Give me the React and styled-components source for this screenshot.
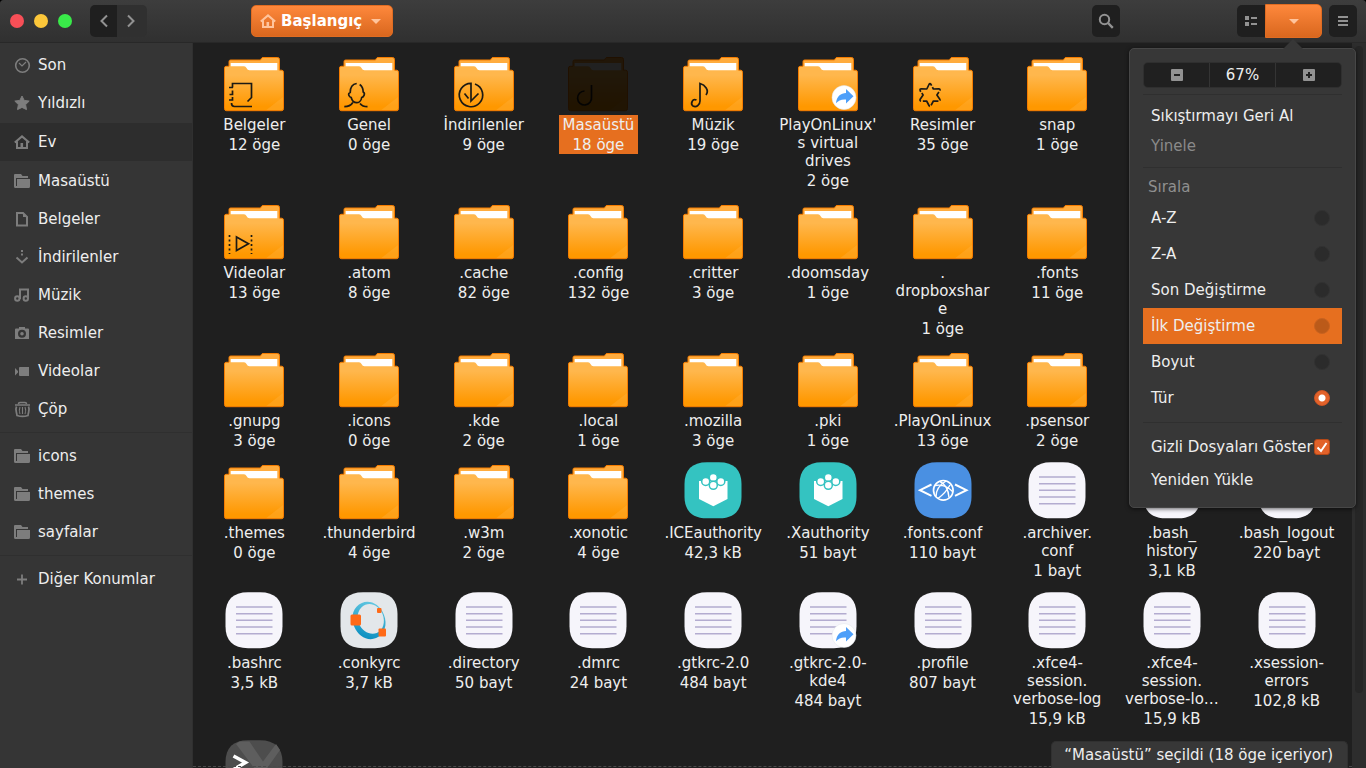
import { useState } from "react";
import styled, { createGlobalStyle, css } from "styled-components";

const GlobalStyle = createGlobalStyle`
    * {
        box-sizing: border-box;
    }
    body {
        margin: 0;
        background: #000;
        color: #eeeeee;
        font-family: "DejaVu Sans", sans-serif;
        font-size: 15px;
        line-height: 18px;
    }
    button, input {
        font: inherit;
        color: inherit;
        margin: 0;
        padding: 0;
        border: none;
        background: none;
    }
    svg {
        display: block;
    }
`;

const Window = styled.div`
    height: 100vh;
    display: flex;
    flex-direction: column;
    overflow: hidden;
    border-radius: 4px 4px 0 0;
    background-color: #1f1f1f;
`;

/* header bar */

const Header = styled.header`
    height: 43px;
    flex: none;
    display: flex;
    align-items: center;
    padding: 0 9px 0 10px;
    background: linear-gradient(#3d3d3d, #303030);
    border-bottom: 1px solid #282828;
`;
const Lights = styled.div`
    display: flex;
    gap: 10px;
`;
const Light = styled.button`
    width: 14px;
    height: 14px;
    border-radius: 99px;
    background-color: ${props => props.$color};
`;
const NavButtons = styled.div`
    display: flex;
    margin-left: 18px;
`;
const HeaderButton = styled.button`
    width: 28px;
    height: 32px;
    display: flex;
    align-items: center;
    justify-content: center;
    border-radius: 5px;
    background-color: #1f1f1f;
    color: #929292;
`;
const BackButton = styled(HeaderButton)`
    width: 27px;
    border-radius: 5px 0 0 5px;
`;
const ForwardButton = styled(HeaderButton)`
    width: 30px;
    border-radius: 0 5px 5px 0;
    background-color: #303030;
`;
const orange = css`
    background: linear-gradient(#fe883c, #d9671e);
    border: 1px solid #e06c22;
`;
const PathButton = styled.button`
    ${orange}
    height: 32px;
    display: flex;
    align-items: center;
    gap: 5px;
    margin-left: 104px;
    padding: 0 11px 0 8px;
    border-radius: 5px;
    color: white;
    font-weight: bold;
    svg:last-child {
        margin-left: 4px;
    }
`;
const HeaderRight = styled.div`
    display: flex;
    align-items: center;
    margin-left: auto;
`;
const ViewButtons = styled.div`
    display: flex;
    align-items: center;
    margin: 0 7px 0 117px;
`;
const ListButton = styled(HeaderButton)`
    border-radius: 5px 0 0 5px;
`;
const MenuAnchor = styled.div`
    position: relative;
`;
const ViewMenuButton = styled.button`
    ${orange}
    width: 57px;
    height: 34px;
    display: flex;
    align-items: center;
    justify-content: center;
    border-radius: 0 5px 5px 0;
`;

/* popover */

const Popover = styled.div`
    position: absolute;
    z-index: 2;
    top: 44px;
    right: -34px;
    width: 227px;
    padding: 13px 13px 12px;
    border: 1px solid #474747;
    border-radius: 5px;
    background-color: #373737;
    box-shadow: 0 1px 4px rgba(0, 0, 0, 0.6);
    &::before {
        content: "";
        position: absolute;
        top: -10px;
        right: 52px;
        border: 10px solid transparent;
        border-top: none;
        border-bottom-color: #373737;
    }
`;
const ZoomBar = styled.div`
    display: grid;
    grid-template-columns: repeat(3, 1fr);
    gap: 1px;
    border: 1px solid #2f2f2f;
    border-radius: 5px;
    overflow: hidden;
    background-color: #343434;
`;
const ZoomCell = styled.button`
    height: 24px;
    display: flex;
    align-items: center;
    justify-content: center;
    background-color: #202020;
`;
const MenuLine = styled.hr`
    height: 1px;
    margin: 6px 0;
    border: none;
    background-color: #2f2f2f;
`;
const MenuItem = styled.button`
    width: 100%;
    height: 30px;
    display: block;
    padding: 0 8px;
    text-align: left;
    &:disabled {
        color: #8a8a8a;
    }
`;
const MenuTitle = styled.div`
    padding: 4px 5px;
    color: #8f8f8f;
`;
const Choice = styled.label`
    height: 36px;
    display: flex;
    align-items: center;
    justify-content: space-between;
    padding: 0 12px 0 8px;
    white-space: nowrap;
    background-color: ${props => props.$hovered ? "#e66f1f" : "transparent"};
`;
const Radio = styled.input`
    appearance: none;
    width: 16px;
    height: 16px;
    border-radius: 99px;
    background-color: ${props => props.$hovered ? "#bb5a19" : "#2b2b2b"};
    border: 1px solid ${props => props.$hovered ? "#c8621f" : "#323232"};
    &:checked {
        border-color: #cf5524;
        background: radial-gradient(circle, white 3px, #e2622a 4px);
    }
`;
const CheckWrap = styled.span`
    position: relative;
    svg {
        position: absolute;
        inset: 0;
        pointer-events: none;
    }
`;
const Checkbox = styled.input`
    appearance: none;
    display: block;
    width: 16px;
    height: 16px;
    border-radius: 3px;
    background-color: #2b2b2b;
    &:checked {
        border: 1px solid #b44817;
        background-color: #e2622a;
    }
`;

/* sidebar */

const Body = styled.div`
    flex: 1;
    min-height: 0;
    display: flex;
`;
const Sidebar = styled.nav`
    width: 193px;
    flex: none;
    padding-top: 3px;
    background-color: #353535;
    border-right: 1px solid #303030;
`;
const Place = styled.a`
    height: 38px;
    display: flex;
    align-items: center;
    gap: 8px;
    padding-left: 14px;
    margin: ${props => props.$active ? "1px 0" : 0};
    background-color: ${props => props.$active ? "#2d2d2d" : "transparent"};
    color: #eeeeee;
    text-decoration: none;
    svg {
        color: #7d7d7d;
    }
`;
const PlaceLine = styled.hr`
    height: 1px;
    margin: 4px 0;
    border: none;
    background-color: #2f2f2f;
`;

/* files */

const Main = styled.main`
    position: relative;
    flex: 1;
    min-width: 0;
    display: flex;
`;
const Files = styled.div`
    flex: 1;
    display: grid;
    grid-template-columns: repeat(10, 1fr);
    align-content: start;
    row-gap: 9px;
    padding: 8px 8px 0 4px;
    overflow: hidden;
`;
const File = styled.button`
    display: flex;
    flex-direction: column;
    align-items: center;
    justify-content: flex-start;
    min-width: 0;
`;
const FileIcon = styled.svg`
    width: 64px;
    height: 64px;
    filter: ${props => props.$dimmed ? "brightness(0.13)" : "none"};
`;
const FileLabel = styled.span`
    display: flex;
    flex-direction: column;
    gap: 2px;
    padding: 1px 4px 0;
    white-space: pre;
    text-align: center;
    background-color: ${props => props.$selected ? "#e66f1f" : "transparent"};
`;
const Scrollbar = styled.div`
    width: 14px;
    padding: 3px;
    background-color: #2d2d2d;
`;
const ScrollThumb = styled.div`
    height: 90%;
    border-radius: 99px;
    background-color: #262626;
`;
const CutLine = styled.div`
    position: absolute;
    left: 0;
    right: 14px;
    bottom: 1px;
    border-top: 1px dashed #4a4a4a;
`;
const Status = styled.div`
    position: absolute;
    right: 18px;
    bottom: 0;
    padding: 4px 14px 4px 12px;
    border: 1px solid #303030;
    border-bottom: none;
    border-radius: 5px 5px 0 0;
    background-color: #373737;
`;

const placeIcons = {
    recent: <g fill="none" stroke="currentColor"><circle cx="8.5" cy="8.5" r="6.8" strokeWidth="1.6" /><path d="M5 6l3 3 4-4" strokeWidth="1.2" /></g>,
    star: <path d="M8 1l2.2 4.4 5 .7-3.6 3.5.9 5L8 12.4l-4.500 2.200.900-5L.8 6.1l5-.7z" fill="currentColor" stroke="currentColor" strokeLinejoin="round" />,
    home: <g fill="none" stroke="currentColor" strokeWidth="2"><path d="M.8 8.6L8 2.4l7.2 6.2M3 7.5V14h10V7.5" /><path d="M7.8 14V9" strokeWidth="2.6" /></g>,
    folder: <path d="M0 2q0-1 1-1h6l1.5 2H14v2H2v8h1V6h13v7.5q0 1.5-1.5 1.5h-13Q0 15 0 13.5z" fill="currentColor" />,
    document: <g><path d="M3 2h6l4 4v8.5H3z" fill="none" stroke="currentColor" strokeWidth="2" /><path d="M9 1.5V6h4.5z" fill="currentColor" /></g>,
    download: <g fill="none" stroke="currentColor" strokeWidth="2"><path d="M8 1v6.5" strokeDasharray="2 1.5" /><path d="M2.5 8.5L8 13.5l5.5-5" /></g>,
    music: <g fill="none" stroke="currentColor" strokeWidth="2"><circle cx="3.3" cy="11.5" r="2.2" /><circle cx="11.8" cy="11.5" r="2.2" /><path d="M6 12V2.5h8V12" /></g>,
    camera: <path fillRule="evenodd" d="M5 2h6v1.5h3a1 1 0 011 1V14H1V4.5a1 1 0 011-1h3zM8 4.8a4 4 0 100 8 4 4 0 000-8zM8 7a1.800 1.800 0 110 3.600A1.800 1.800 0 018 7z" fill="currentColor" />,
    video: <path d="M1 5l3 3v1.5l-3 3zM5 4.5L6 4h9v9H6l-1-.5z" fill="currentColor" />,
    trash: <g fill="none" stroke="currentColor"><path d="M1 4h15M4.5 3q0-1.500 1.500-1.500h5q1.500 0 1.500 1.500" strokeWidth="1.6" /><path d="M2.5 5.5c-1.500 3 0 5 .5 9 3 1 8 1 11 0 .5-4 2-6 .5-9" strokeWidth="1.7" /><path d="M6 6q-1.500 3.500 0 7M8.500 6v7M11 6q1.500 3.500 0 7" strokeWidth="1.1" /></g>,
    plus: <path d="M8 3.5v10M3 8.5h10" fill="none" stroke="currentColor" strokeWidth="1.8" />,
};

const PlaceIcon = ({ name, color }) => (
    <svg width="16" height="16" viewBox="0 0 16 16" overflow="visible" color={color} aria-hidden="true">{placeIcons[name]}</svg>
);

const CaretDown = () => (
    <svg width="10" height="5" viewBox="0 0 10 5" aria-hidden="true"><path d="M0 0h10L5 5z" fill="#ffc49c" /></svg>
);

// emblems are drawn on the lower left corner of the folder
const emblems = {
    documents: <path d="M10.5 36.5v-4h19v14l-4 4M7 36.5h4M10.5 39.5v4H7.5M10.5 46v3H7M9.5 52q0 3.5 3 3.5h17.5" />,
    public: <path d="M19.700 32.500q-6.500 1-6.500 9c-3 1-1 4.500 1 5 1 4 4 5.200 5.500 5.200s4.500-1.200 5-5.200c2-.5 4-4 1.500-5.500q0-5-3.500-7.500M7.300 55.700q6 0 8.500-4.200M23 52.500q2.500 3.200 7.500 3.200" />,
    downloads: <path d="M23 33a11.700 11.700 0 11-4-.7V50l7.500-7.500M12.500 42.500l4 5" />,
    desktop: <path d="M25.500 34v12a7 7 0 11-7-6" />,
    music: <path d="M15.500 49c-4-2-6.500 4-3.500 6 3 1.500 7-.5 7-5V32.500c5 1.500 9.500 6.500 6 11.500" />,
    pictures: <path d="M15.800 38L18 33.500q1-1.800 2 0L22.400 38L27.600 37.800q2 .2 1.200 2L25.900 44L28.800 48.200q.8 2-1.200 2L22.400 50L20 54.500q-1 1.800-2 0L15.600 50L10.400 50.200q-2-.2-1.200-2L12.100 44L9.200 39.800q-.8-2 1.200-2z" strokeDasharray="10 1.700" strokeDashoffset="1" strokeLinejoin="round" />,
    videos: <><path d="M14.500 38v13.500L26.500 44.800z" /><path d="M7.500 36v19M29.500 36v19" strokeDasharray="2 2.500" /></>,
};

const Folder = ({ emblem }) => (
    <>
        <path d="M7 22V10.500q0-1.500 1.500-1.500H38.500l1-1.700q.4-.8 1.500-.8H55.500q2 0 2 2V22z" fill="#ffac3e" stroke="#f57c00" />
        <path d="M8.700 12h46.600v8H8.700z" fill="white" />
        <path d="M2.500 17q0-1.700 1.700-1.700H22q1.700 0 2.500 1.700 1 2.200 3 2.200h32q2 0 2 2v36.500q0 2-2 2H4.500q-2 0-2-2z" fill="url(#folderFront)" />
        <path d="M61 46v11.500q0 1.700-1.700 1.700H44z" fill="#ffb74d" opacity="0.3" />
        <path d="M7 15.300H4.200Q2.500 15.300 2.500 17v40.700q0 2 2 2h55q2 0 2-2V21.200q0-2-2-2h-2" fill="none" stroke="#f57c00" />
        <g fill="none" stroke="#1c1a14" strokeWidth="1.7">{emblems[emblem]}</g>
    </>
);

const Squircle = ({ fill }) => (
    <path d="M26 3.300h12C53 3.300 60.500 11 60.500 25v12.600C60.500 51.600 53 59.300 38 59.300H26C11 59.300 3.500 51.600 3.500 37.600V25C3.500 11 11 3.300 26 3.300z" fill={fill} />
);

const TextFile = () => (
    <>
        <Squircle fill="#f6f5fb" />
        <path d="M14 18h36.500M14 24.700h36.500M14 31.300h36.500M14 38h36.500M14 44.700h36.500" stroke="#b3acd0" strokeWidth="1.5" />
    </>
);

const BrickFile = () => (
    <>
        <Squircle fill="#34c3c1" />
        <path d="M18 22h28.500v18L32.300 47.300 18 40z" fill="white" />
        <g fill="white" stroke="#34c3c1" strokeWidth="1.5">
            <circle cx="32.3" cy="18.5" r="4" />
            <circle cx="24.7" cy="22.4" r="4" />
            <circle cx="39.8" cy="22.4" r="4" />
            <circle cx="32.3" cy="26.3" r="4" />
        </g>
    </>
);

const WebFile = () => (
    <>
        <Squircle fill="#4a90e2" />
        <g fill="none" stroke="white">
            <path d="M20.500 25.500L9 31.200l11.500 5.600M44 25.500l11.500 5.700L44 36.800" strokeWidth="2" />
            <circle cx="32.3" cy="31.3" r="9.8" strokeWidth="1.7" />
            <path d="M24 26.500q10-2 17.500 6M29 22.500q8 4 9 16M35 22q-10 6-10 15.500M27 39.500q8-6 12-13.500" strokeWidth="1.4" />
        </g>
    </>
);

const ConkyFile = () => (
    <>
        <Squircle fill="#e3e7ea" />
        <path fillRule="evenodd" transform="rotate(-22 32 31.500)" d="M32 12.500c9 0 16 8 16 19s-7 19-16 19-16-8-16-19 7-19 16-19zM34.500 15.500c-7 0-13 6.500-13 15s6 15.500 13 15.500 12.500-7 12.500-15.500-5.500-15-12.500-15z" fill="url(#conkyRing)" />
        <g fill="#ff6a17">
            <rect x="13.5" y="25.5" width="10.5" height="11" rx="1.5" />
            <rect x="40" y="19" width="4.5" height="5" rx="1" />
            <rect x="41.5" y="39.5" width="7.5" height="8" rx="1" />
        </g>
    </>
);

const ScriptFile = () => (
    <>
        <Squircle fill="#4d4d4d" />
        <path d="M14 7l3.500-2.500h10L41 24.500 54 7l4 6-14.500 20.500H34z" fill="#5e5e5e" />
        <path d="M11.500 19l12 6.500-12 7" fill="none" stroke="white" strokeWidth="3.5" />
    </>
);

const LinkBadge = () => (
    <>
        <circle cx="48" cy="46.500" r="12" fill="white" stroke="#dfe2e8" strokeWidth="0.5" />
        <path d="M40 52.300C40.500 45.500 45 42 50 42v-4l7.500 7.200-7.500 7.300v-4C45.500 48 42.500 49.500 40 52.300z" fill="#4d9ff9" />
    </>
);

const drawings = {
    folder: Folder,
    text: TextFile,
    brick: BrickFile,
    web: WebFile,
    conky: ConkyFile,
    script: ScriptFile,
};

const places = [
    ["recent", "Son"],
    ["star", "Yıldızlı"],
    ["home", "Ev"],
    ["folder", "Masaüstü"],
    ["document", "Belgeler"],
    ["download", "İndirilenler"],
    ["music", "Müzik"],
    ["camera", "Resimler"],
    ["video", "Videolar"],
    ["trash", "Çöp"],
    null,
    ["folder", "icons"],
    ["folder", "themes"],
    ["folder", "sayfalar"],
    null,
    ["plus", "Diğer Konumlar"],
];

const hiddenFolder = (name, size) => ({ type: "folder", name, size });
const textFile = (name, size) => ({ type: "text", name, size });

const files = [
    { type: "folder", emblem: "documents", name: "Belgeler", size: "12 öge" },
    { type: "folder", emblem: "public", name: "Genel", size: "0 öge" },
    { type: "folder", emblem: "downloads", name: "İndirilenler", size: "9 öge" },
    { type: "folder", emblem: "desktop", name: "Masaüstü", size: "18 öge" },
    { type: "folder", emblem: "music", name: "Müzik", size: "19 öge" },
    { type: "folder", link: true, name: "PlayOnLinux'\ns virtual\ndrives", size: "2 öge" },
    { type: "folder", emblem: "pictures", name: "Resimler", size: "35 öge" },
    hiddenFolder("snap", "1 öge"),
    null,
    null,
    { type: "folder", emblem: "videos", name: "Videolar", size: "13 öge" },
    hiddenFolder(".atom", "8 öge"),
    hiddenFolder(".cache", "82 öge"),
    hiddenFolder(".config", "132 öge"),
    hiddenFolder(".critter", "3 öge"),
    hiddenFolder(".doomsday", "1 öge"),
    hiddenFolder(".\ndropboxshar\ne", "1 öge"),
    hiddenFolder(".fonts", "11 öge"),
    null,
    null,
    hiddenFolder(".gnupg", "3 öge"),
    hiddenFolder(".icons", "0 öge"),
    hiddenFolder(".kde", "2 öge"),
    hiddenFolder(".local", "1 öge"),
    hiddenFolder(".mozilla", "3 öge"),
    hiddenFolder(".pki", "1 öge"),
    hiddenFolder(".PlayOnLinux", "13 öge"),
    hiddenFolder(".psensor", "2 öge"),
    null,
    null,
    hiddenFolder(".themes", "0 öge"),
    hiddenFolder(".thunderbird", "4 öge"),
    hiddenFolder(".w3m", "2 öge"),
    hiddenFolder(".xonotic", "4 öge"),
    { type: "brick", name: ".ICEauthority", size: "42,3 kB" },
    { type: "brick", name: ".Xauthority", size: "51 bayt" },
    { type: "web", name: ".fonts.conf", size: "110 bayt" },
    textFile(".archiver.\nconf", "1 bayt"),
    textFile(".bash_\nhistory", "3,1 kB"),
    textFile(".bash_logout", "220 bayt"),
    textFile(".bashrc", "3,5 kB"),
    { type: "conky", name: ".conkyrc", size: "3,7 kB" },
    textFile(".directory", "50 bayt"),
    textFile(".dmrc", "24 bayt"),
    textFile(".gtkrc-2.0", "484 bayt"),
    { type: "text", link: true, name: ".gtkrc-2.0-\nkde4", size: "484 bayt" },
    textFile(".profile", "807 bayt"),
    textFile(".xfce4-\nsession.\nverbose-log", "15,9 kB"),
    textFile(".xfce4-\nsession.\nverbose-lo…", "15,9 kB"),
    textFile(".xsession-\nerrors", "102,8 kB"),
    { type: "script" },
];

const sortings = ["A-Z", "Z-A", "Son Değiştirme", "İlk Değiştirme", "Boyut", "Tür"];

function ViewMenu() {
    const [sorting, setSorting] = useState("Tür");
    const [hovered, setHovered] = useState("İlk Değiştirme");
    const [showHidden, setShowHidden] = useState(true);

    return (
        <Popover>
            <ZoomBar>
                <ZoomCell aria-label="Uzaklaş">
                    <svg width="12" height="12"><rect width="12" height="12" rx="1" fill="#929292" /><path d="M3 6h6" stroke="#202020" strokeWidth="2" /></svg>
                </ZoomCell>
                <ZoomCell>67%</ZoomCell>
                <ZoomCell aria-label="Yakınlaş">
                    <svg width="12" height="12"><rect width="12" height="12" rx="1" fill="#929292" /><path d="M3 6h6M6 3v6" stroke="#202020" strokeWidth="2" /></svg>
                </ZoomCell>
            </ZoomBar>
            <MenuLine />
            <MenuItem>Sıkıştırmayı Geri Al</MenuItem>
            <MenuItem disabled>Yinele</MenuItem>
            <MenuLine />
            <MenuTitle>Sırala</MenuTitle>
            {sortings.map(name => (
                <Choice key={name} $hovered={name === hovered} onMouseEnter={() => setHovered(name)}>
                    {name}
                    <Radio type="radio" name="sorting" $hovered={name === hovered} checked={name === sorting} onChange={() => setSorting(name)} />
                </Choice>
            ))}
            <MenuLine />
            <Choice>
                Gizli Dosyaları Göster
                <CheckWrap>
                    <Checkbox type="checkbox" checked={showHidden} onChange={(e) => setShowHidden(e.target.checked)} />
                    {showHidden && <svg width="16" height="16"><path d="M3.500 8.500l3.500 3.500 5.500-8" fill="none" stroke="white" strokeWidth="2" /></svg>}
                </CheckWrap>
            </Choice>
            <MenuItem>Yeniden Yükle</MenuItem>
        </Popover>
    );
}

export default function App() {
    const [selected, setSelected] = useState("Masaüstü");

    return (
        <Window>
            <GlobalStyle />
            <svg width="0" height="0" aria-hidden="true">
                <defs>
                    <linearGradient id="folderFront" x1="0" y1="0" x2="0" y2="1">
                        <stop offset="0.2" stopColor="#ffb74d" />
                        <stop offset="0.9" stopColor="#ff9800" />
                    </linearGradient>
                    <linearGradient id="conkyRing" x1="1" y1="0" x2="0.3" y2="1">
                        <stop offset="0" stopColor="#6fd0e6" />
                        <stop offset="1" stopColor="#0b8fc0" />
                    </linearGradient>
                </defs>
            </svg>
            <Header>
                <Lights>
                    <Light $color="#f74f57" aria-label="Kapat" />
                    <Light $color="#fcc73a" aria-label="Küçült" />
                    <Light $color="#39ea49" aria-label="Büyüt" />
                </Lights>
                <NavButtons>
                    <BackButton aria-label="Geri">
                        <svg width="16" height="16"><path d="M11 2.500L5.500 8l5.500 5.500" fill="none" stroke="#929292" strokeWidth="2" /></svg>
                    </BackButton>
                    <ForwardButton aria-label="İleri">
                        <svg width="16" height="16"><path d="M4 2.500L9.500 8 4 13.500" fill="none" stroke="#929292" strokeWidth="2" /></svg>
                    </ForwardButton>
                </NavButtons>
                <PathButton>
                    <PlaceIcon name="home" color="#ffc49c" />
                    Başlangıç
                    <CaretDown />
                </PathButton>
                <HeaderRight>
                    <HeaderButton aria-label="Ara">
                        <svg width="16" height="16" fill="none" stroke="#929292"><circle cx="6.5" cy="6.5" r="4.7" strokeWidth="2" /><path d="M10 10l4.800 4.800" strokeWidth="2.4" /></svg>
                    </HeaderButton>
                    <ViewButtons>
                        <ListButton aria-label="Liste">
                            <svg width="12" height="10" fill="#929292"><path d="M0 0h4v4H0zM0 6h4v4H0zM6 1h6v2H6zM6 7h6v2H6z" /></svg>
                        </ListButton>
                        <MenuAnchor>
                            <ViewMenuButton aria-label="Görünüm"><CaretDown /></ViewMenuButton>
                            <ViewMenu />
                        </MenuAnchor>
                    </ViewButtons>
                    <HeaderButton aria-label="Menü">
                        <svg width="10" height="10" fill="#929292"><path d="M0 0h10v2H0zM0 4h10v2H0zM0 8h10v2H0z" /></svg>
                    </HeaderButton>
                </HeaderRight>
            </Header>
            <Body>
                <Sidebar>
                    {places.map((place, i) => place ? (
                        <Place key={i} href="#" $active={place[1] === "Ev"}>
                            <PlaceIcon name={place[0]} />
                            {place[1]}
                        </Place>
                    ) : <PlaceLine key={i} />)}
                </Sidebar>
                <Main>
                    <Files>
                        {files.map((file, i) => {
                            if (!file) return <span key={i} />;
                            const Drawing = drawings[file.type];
                            const isSelected = file.name === selected;
                            return (
                                <File key={i} onClick={() => setSelected(file.name)}>
                                    <FileIcon viewBox="0 0 64 64" $dimmed={isSelected}>
                                        <Drawing emblem={file.emblem} />
                                        {file.link && <LinkBadge />}
                                    </FileIcon>
                                    {file.name && (
                                        <FileLabel $selected={isSelected}>
                                            <span>{file.name}</span>
                                            <span>{file.size}</span>
                                        </FileLabel>
                                    )}
                                </File>
                            );
                        })}
                    </Files>
                    <Scrollbar><ScrollThumb /></Scrollbar>
                    <CutLine />
                    <Status>“Masaüstü” seçildi (18 öge içeriyor)</Status>
                </Main>
            </Body>
        </Window>
    );
}
